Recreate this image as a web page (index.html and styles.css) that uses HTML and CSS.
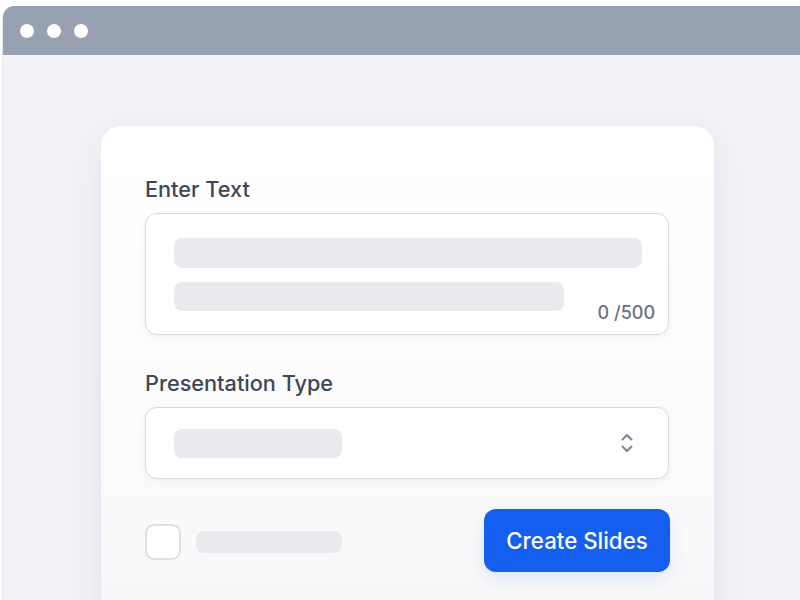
FILE: index.html
```html
<!DOCTYPE html>
<html lang="en">
<head>
    <meta charset="UTF-8">
    <meta name="viewport" content="width=device-width, initial-scale=1.0">
    <title>Create Slides</title>
    <link rel="stylesheet" href="styles.css">
</head>
<body>
    <div class="window">
        <div class="window-bar">
            <span class="dot"></span>
            <span class="dot"></span>
            <span class="dot"></span>
        </div>
        <div class="window-body">
            <div class="card">
                <label class="field-label">Enter Text</label>
                <div class="text-box">
                    <div class="skeleton line-long"></div>
                    <div class="skeleton line-short"></div>
                    <span class="counter">0 /500</span>
                </div>

                <label class="field-label second">Presentation Type</label>
                <div class="select-box">
                    <div class="skeleton select-value"></div>
                    <svg class="chevrons" width="14" height="22" viewBox="0 0 14 22" fill="none" stroke="#7d8596" stroke-width="2" stroke-linecap="round" stroke-linejoin="round">
                        <path d="M2.5 7.5L7 3l4.5 4.5"/>
                        <path d="M2.5 14.5L7 19l4.5-4.5"/>
                    </svg>
                </div>

                <div class="actions">
                    <span class="checkbox"></span>
                    <div class="skeleton check-text"></div>
                    <button class="btn-create">Create Slides</button>
                </div>
            </div>
        </div>
    </div>
</body>
</html>
```

FILE: styles.css
```css
html, body {
    margin: 0;
    height: 100%;
    overflow: hidden;
    background-color: #ffffff;
    font-family: Inter, "Noto Sans", sans-serif;
}

.window {
    margin: 6px 0 0 2px;
    height: 620px;
    background-color: #f2f3f7;
    border-top-left-radius: 12px;
    border-left: 1px solid #e6e8ee;
    overflow: hidden;
}

.window-bar {
    height: 49px;
    background-color: #98a1b2;
    display: flex;
    align-items: center;
    gap: 13px;
    padding-left: 17px;
}

.dot {
    width: 14px;
    height: 14px;
    border-radius: 50%;
    background-color: #ffffff;
}

.window-body {
    padding: 71px 0 0 98px;
}

.card {
    width: 524px;
    height: 520px;
    padding: 50px 45px 0 44px;
    background: linear-gradient(#ffffff 0%, #fbfbfc 60%, #f5f5f7 100%);
    border-radius: 20px;
    box-shadow: 0 10px 40px rgba(40, 50, 80, 0.08);
}

.field-label {
    display: block;
    font-size: 21.7px;
    font-weight: 500;
    line-height: 26px;
    color: #3e4757;
    margin-bottom: 11px;
}

.field-label.second {
    margin-top: 35px;
    margin-bottom: 11px;
}

.text-box {
    position: relative;
    box-sizing: border-box;
    height: 122px;
    padding: 24px 26px 0 28px;
    background-color: #ffffff;
    border: 1.5px solid #d6d9e1;
    border-radius: 12px;
    box-shadow: 0 2px 6px rgba(30, 40, 70, 0.06);
}

.skeleton {
    background-color: #e9eaee;
    border-radius: 8px;
}

.line-long {
    height: 30px;
}

.line-short {
    width: 390px;
    height: 29px;
    margin-top: 14px;
}

.counter {
    position: absolute;
    right: 13px;
    bottom: 11px;
    font-size: 18px;
    font-weight: 500;
    color: #6b7280;
}

.select-box {
    box-sizing: border-box;
    height: 72px;
    display: flex;
    align-items: center;
    justify-content: space-between;
    padding: 0 34px 0 28px;
    background-color: #ffffff;
    border: 1.5px solid #d6d9e1;
    border-radius: 12px;
    box-shadow: 0 2px 6px rgba(30, 40, 70, 0.06);
}

.select-value {
    width: 168px;
    height: 29px;
}

.actions {
    display: flex;
    align-items: center;
    margin-top: 30px;
}

.checkbox {
    box-sizing: border-box;
    width: 36px;
    height: 36px;
    border: 2px solid #dcdfe6;
    border-radius: 9px;
    background-color: #ffffff;
    margin-top: 3px;
}

.check-text {
    width: 146px;
    height: 22px;
    margin: 3px 0 0 15px;
}

.btn-create {
    margin-left: auto;
    margin-right: -1px;
    width: 186px;
    height: 63px;
    border: none;
    border-radius: 12px;
    background-color: #145ef0;
    color: #ffffff;
    font-family: Inter, "Noto Sans", sans-serif;
    font-size: 22.3px;
    font-weight: 500;
    box-shadow: 0 6px 16px rgba(20, 94, 240, 0.12);
    cursor: pointer;
}
```
